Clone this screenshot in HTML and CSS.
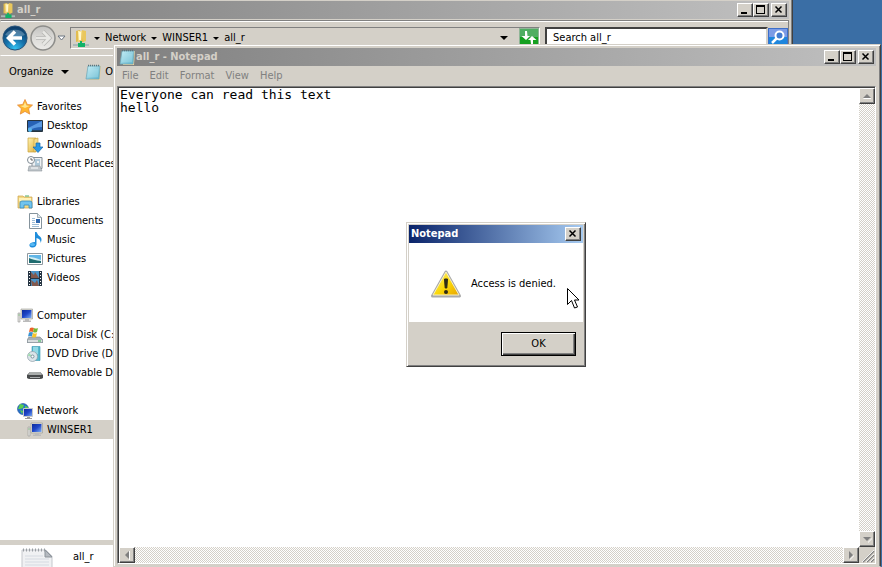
FILE: index.html
```html
<!DOCTYPE html>
<html lang="en">
<head>
<meta charset="utf-8">
<title>all_r - Notepad</title>
<link rel="stylesheet" href="styles.css">
</head>
<body>
<svg class="defs" aria-hidden="true">
  <defs>
    <linearGradient id="gold" x1="0" y1="0" x2="1" y2="1"><stop offset="0" stop-color="#fff3b0"/><stop offset="1" stop-color="#dfaf3c"/></linearGradient>
    <linearGradient id="screen" x1="0" y1="0" x2="1" y2="1"><stop offset="0" stop-color="#0b2a9c"/><stop offset=".5" stop-color="#1f46c8"/><stop offset="1" stop-color="#7fb0f4"/></linearGradient>
    <linearGradient id="pad" x1="0" y1="0" x2="1" y2="1"><stop offset="0" stop-color="#c9f0f8"/><stop offset="1" stop-color="#5fb4cc"/></linearGradient>
    <linearGradient id="warn" x1="0" y1="0" x2="1" y2="1"><stop offset="0" stop-color="#fff27a"/><stop offset=".55" stop-color="#fbd808"/><stop offset="1" stop-color="#e8a400"/></linearGradient>
    <radialGradient id="back" cx=".5" cy=".95" r=".9"><stop offset="0" stop-color="#35c5f4"/><stop offset=".45" stop-color="#1673ac"/><stop offset="1" stop-color="#0d3c68"/></radialGradient>
    <linearGradient id="fwd" x1="0" y1="0" x2="0" y2="1"><stop offset="0" stop-color="#c2c2c0"/><stop offset=".5" stop-color="#dcdbd8"/><stop offset="1" stop-color="#ecebe8"/></linearGradient>
    <symbol id="i-share" viewBox="0 0 16 18">
      <path d="M3 2l4-1v11l-4 1z" fill="#e2bd50"/><path d="M5 2h6v11H5z" fill="url(#gold)"/><path d="M9 1l4 1v10l-3 1z" fill="#e9c75c"/><path d="M6 3h2v8H6z" fill="#fff8cf"/>
      <path d="M0 15h16v2H0z" fill="#aab9b9"/><path d="M7 12h2v2h3v4H5v-4h2z" fill="#12b267"/>
    </symbol>
    <symbol id="i-pad" viewBox="0 0 16 16">
      <path d="M4 2h12l-1 14H4z" fill="#e8cf9d"/><path d="M3 2h12l-1 13H1z" fill="url(#pad)" stroke="#6aa5b4" stroke-width=".7"/><path d="M3 1.500h12" stroke="#5a757e" stroke-width="1.500" stroke-dasharray="1 1"/><path d="M4 6h9M4 8h9M3 10h10M3 12h10" stroke="#b5e4ee" stroke-width=".6"/>
    </symbol>
    <symbol id="i-pc" viewBox="0 0 16 16">
      <path d="M1 5h2v9H1z" fill="#e4e4e0" stroke="#999" stroke-width=".6"/><path d="M1.500 7h1" stroke="#5b5"/><path d="M4 1h11.500v10H4z" fill="#dcdcd8" stroke="#98988f" stroke-width=".6"/><path d="M5 2h9.500v8H5z" fill="url(#screen)"/><path d="M8 11h4v1.500h2V14H6v-1.500h2z" fill="#bbb"/>
    </symbol>
  </defs>
</svg>

<main class="desktop">
  <section class="window explorer" aria-label="all_r">
    <header class="titlebar">
      <svg class="title-icon" viewBox="0 0 16 18"><use href="#i-share"/></svg>
      <h1 class="title">all_r</h1>
      <div class="controls">
        <button class="ctl" aria-label="Minimize"><svg viewBox="0 0 12 10"><path d="M2 7h6v2H2z"/></svg></button>
        <button class="ctl" aria-label="Maximize"><svg viewBox="0 0 12 10"><path fill-rule="evenodd" d="M1 0h9v9H1zM2 2v6h7V2z"/></svg></button>
        <button class="ctl close" aria-label="Close"><svg viewBox="0 0 12 10"><path d="M2.500 1.500l6 6M8.500 1.500l-6 6" stroke="#000" stroke-width="1.500"/></svg></button>
      </div>
    </header>
    <nav class="navbar">
      <button class="plain" aria-label="Back"><svg class="orb" viewBox="0 0 28 28"><circle cx="14" cy="14" r="13" fill="#c0c0bd"/><circle cx="14" cy="14" r="12" fill="url(#back)" stroke="#28557c"/><path d="M4 11a11 9 0 0 1 20 0q-10 4-20 0" fill="#fff" opacity=".25"/><path d="M14 7.500L7.500 14l6.500 6.500M8 14h13" fill="none" stroke="#fff" stroke-width="3.500"/></svg></button>
      <button class="plain" aria-label="Forward"><svg class="orb" viewBox="0 0 28 28"><circle cx="14" cy="14" r="12" fill="url(#fwd)" stroke="#8d8d8a" stroke-width="1.500"/><path d="M14 7.500l6.500 6.500-6.500 6.500M20 14H7" fill="none" stroke="#b5b5b2" stroke-width="4"/><path d="M14 7.500l6.500 6.500-6.500 6.500M20 14H7" fill="none" stroke="#e8e8e5" stroke-width="2.500"/></svg></button>
      <button class="plain recent" aria-label="Recent pages"><svg viewBox="0 0 9 6"><path d="M1 1h7L4.500 5z" fill="#fff" stroke="#6b7480"/></svg></button>
      <div class="address">
        <svg class="addr-icon" viewBox="0 0 16 18"><use href="#i-share"/></svg>
        <i class="arrow"></i>
        <a href="#network">Network</a><i class="arrow"></i>
        <a href="#winser1">WINSER1</a><i class="arrow"></i>
        <a href="#all_r">all_r</a>
        <i class="arrow last"></i>
        <button class="plain" aria-label="Refresh"><svg class="tool" viewBox="0 0 20 20"><path d="M0 0h20v20H0z" fill="#8fb596"/><path d="M1 1h18v8H1z" fill="#4fae62"/><path d="M1 9h18v10H1z" fill="#16a021"/><path d="M8 3H6v5H2.500L7 12l4-4H8.500zM12 16h2v-4h3.500L13 8l-4 4h2.500z" fill="#fff"/></svg></button>
      </div>
      <div class="search">
        <input type="text" aria-label="Search all_r" value="Search all_r">
        <button class="plain" aria-label="Search"><svg class="tool" viewBox="0 0 20 20"><path d="M0 0h20v20H0z" fill="#3d6fc9"/><path d="M1 1h18v8H1z" fill="#7b9be6"/><path d="M1 9h18v10H1z" fill="#1e86dd"/><circle cx="11.500" cy="7.500" r="4" fill="#427bd0" stroke="#fff" stroke-width="2"/><path d="M8.500 10.500L4 15" stroke="#fff" stroke-width="2.500"/></svg></button>
      </div>
    </nav>
    <div class="toolbar">
      <button class="plain organize">Organize<i class="arrow big"></i></button>
      <button class="plain open"><svg class="icon" viewBox="0 0 16 16"><use href="#i-pad"/></svg>Open</button>
    </div>
    <aside class="sidebar">
      <ul>
        <li><a class="head" href="#favorites"><svg class="icon" viewBox="0 0 16 16"><path d="M8 .5l2.300 5 5.200.6-3.900 3.600 1.100 5.400L8 12.400 3.300 15.100l1.100-5.400L.5 6.100l5.200-.6z" fill="#ffb52e" stroke="#e58a3a" stroke-width=".8"/><path d="M8 3l1.500 3.500 3 .4-4.500 2-4.500-2 3-.4z" fill="#ffe58f"/></svg>Favorites</a></li>
        <li><a href="#desktop"><svg class="icon" viewBox="0 0 16 16"><path d="M.5 2.500h15v11H.5z" fill="#2762b5" stroke="#26343f"/><path d="M1 10l14-7v6q-8 0-14 4z" fill="#5a9ae2"/><path d="M1 12h14v1H1z" fill="#27445e"/><circle cx="3" cy="12" r="2" fill="#59baf0"/></svg>Desktop</a></li>
        <li><a href="#downloads"><svg class="icon" viewBox="0 0 16 16"><path d="M1 1h8v14H1z" fill="url(#gold)" stroke="#c9a13b" stroke-width=".7"/><path d="M7 2l4-1v12l-4 2z" fill="#f5dc88" stroke="#c9a13b" stroke-width=".6"/><path d="M9 6h4v4h3l-5 5.500L6 10h3z" fill="#2898e6" stroke="#1667ad" stroke-width=".7"/></svg>Downloads</a></li>
        <li><a href="#recent"><svg class="icon" viewBox="0 0 16 16"><path d="M5 1.500h10v11H5z" fill="#eef1f3" stroke="#879199"/><path d="M8 4h5M8 6h2M12 6h1M8 8h5M8 10h5" stroke="#6f9fbd"/><path d="M2 10h11l2 5H1z" fill="#bfc6cb" stroke="#8d959a" stroke-width=".6"/><circle cx="4" cy="4" r="3.500" fill="#fff" stroke="#7f8b94"/><path d="M4 2v2h2" fill="none" stroke="#444" stroke-width=".8"/><path d="M4 12h7" stroke="#fff"/></svg>Recent Places</a></li>
      </ul>
      <ul>
        <li><a class="head" href="#libraries"><svg class="icon" viewBox="0 0 16 16"><path d="M1 14V2h5l1 1h8v11z" fill="#f3d983" stroke="#cba24b" stroke-width=".7"/><path d="M2 4h12v3H2z" fill="#fff2b8"/><path d="M8 2h4" stroke="#53ae67"/><path d="M3 14V9q0-2 2-2h8q2 0 2 2v5h-3v-3H7v3z" fill="#71c4ee" stroke="#368abc" stroke-width=".8"/></svg>Libraries</a></li>
        <li><a href="#documents"><svg class="icon" viewBox="0 0 16 16"><path d="M2.500.5h8l4 4v11h-12z" fill="#fff" stroke="#85939c"/><path d="M10.500.5v4h4" fill="#dce5ea" stroke="#85939c" stroke-width=".7"/><path d="M5 5.500h3M5 7.500h3M5 9.500h3M5 11.500h7M5 13.500h7" stroke="#9dbdd6"/><path d="M9 6h4v4H9z" fill="#2c67af"/></svg>Documents</a></li>
        <li><a href="#music"><svg class="icon" viewBox="0 0 16 16"><path d="M8 0h1.500q1 3 4 5 2 2 0 6 .5-4-4-5v6.500Q8.500 16 5 15.500 2 15 2.500 12.500 3.500 10 8 10z" fill="#1e8ddb"/><ellipse cx="5.500" cy="12.500" rx="2.500" ry="1.500" fill="#58baf5"/></svg>Music</a></li>
        <li><a href="#pictures"><svg class="icon" viewBox="0 0 16 16"><path d="M.5 2.500h15v11H.5z" fill="#fff" stroke="#8e989e"/><path d="M2 4h12v8H2z" fill="#61b6e7"/><path d="M2 6q5 0 12 3v3H2z" fill="#d5eff3"/><path d="M2 7q4 2 12 3v2H2z" fill="#206c70"/></svg>Pictures</a></li>
        <li><a href="#videos"><svg class="icon" viewBox="0 0 16 16"><path d="M1 1h14v15H1z" fill="#273644"/><path d="M4 1h8v7H4zM4 9h8v7H4z" fill="#4a94c9"/><path d="M4 2l3 3 1-3 4 6H4zM4 10l4 3 2-3 2 6H5z" fill="#83594d"/><path d="M2.500 2v14M13.500 2v14" stroke="#fff" stroke-dasharray="1 2"/></svg>Videos</a></li>
      </ul>
      <ul>
        <li><a class="head" href="#computer"><svg class="icon" viewBox="0 0 16 16"><use href="#i-pc"/></svg>Computer</a></li>
        <li><a href="#c"><svg class="icon" viewBox="0 0 16 16"><path d="M2 10h11l3 3v3H0v-3z" fill="#a7b0b5" stroke="#78838a" stroke-width=".6"/><path d="M1 13h14v2H1z" fill="#d8dddf"/><path d="M11 14h3" stroke="#2bb84d"/><path d="M3 1q2-1 4 0L6 5Q4 4 2 5z" fill="#ed6027"/><path d="M7 1q2 1 4 0l-1 4Q8 6 6 5z" fill="#78b734"/><path d="M2 5.500q2-1 4 0l-1 4q-2-1-4 0z" fill="#3893d4"/><path d="M6 6q2 1 4 0l-1 4q-2 1-4 0z" fill="#f8c52c"/></svg>Local Disk (C:)</a></li>
        <li><a href="#d"><svg class="icon" viewBox="0 0 16 16"><path d="M5 .5h8v14H5z" fill="#55b8ce" stroke="#3595ae" stroke-width=".6"/><path d="M6 1h5v7H6z" fill="#91d9e5"/><circle cx="5.500" cy="10.500" r="5" fill="#dce5ea" stroke="#8c9ca6" stroke-width=".7"/><path d="M5.500 10.500L2 7l-1 3z" fill="#a2dfb0"/><circle cx="5.500" cy="10.500" r="1.500" fill="#fff" stroke="#7f929c"/></svg>DVD Drive (D:)</a></li>
        <li><a href="#e"><svg class="icon" viewBox="0 0 16 16"><path d="M3 7h10l3 3v3q-1 1-3 1H3q-2 0-3-1v-3z" fill="#484b4c"/><path d="M3 7h10l2 3H1z" fill="#aaaead"/><path d="M3 12h10v1H3z" fill="#a8acad"/></svg>Removable Disk</a></li>
      </ul>
      <ul>
        <li><a class="head" href="#network"><svg class="icon" viewBox="0 0 16 16"><circle cx="6" cy="6" r="5.500" fill="#2773c9" stroke="#1c4c98" stroke-width=".6"/><path d="M3 1l4 1-1 3-3 1-2 0zM8 3l3 1-1 4-2-1zM3 7l3 1-1 3z" fill="#5bcf4f"/><path d="M6.500 5.500h9v8h-9z" fill="url(#screen)" stroke="#c7c9c8"/><path d="M10 14h3v1h2v1H8v-1h2z" fill="#999"/></svg>Network</a></li>
        <li class="selected"><a href="#winser1"><svg class="icon" viewBox="0 0 16 16"><use href="#i-pc"/></svg>WINSER1</a></li>
      </ul>
    </aside>
    <footer class="details">
      <svg class="file" viewBox="0 0 32 22"><path d="M1 3h24l6 6v13H1z" fill="#f0f1f3" stroke="#c5c8cd"/><path d="M24 3v7h7z" fill="#b5bac0" stroke="#8d949b"/><path d="M2 3h22" stroke="#9a9fa4" stroke-width="3" stroke-dasharray="1 2"/><path d="M4 9h18M4 12h24M4 15h24M4 18h24" stroke="#d5dae1"/></svg>
      <span>all_r</span>
    </footer>
  </section>

  <section class="window notepad" aria-label="all_r - Notepad">
    <header class="titlebar">
      <svg class="title-icon" viewBox="0 0 16 16"><use href="#i-pad"/></svg>
      <h2 class="title">all_r - Notepad</h2>
      <div class="controls">
        <button class="ctl" aria-label="Minimize"><svg viewBox="0 0 12 10"><path d="M2 7h6v2H2z"/></svg></button>
        <button class="ctl" aria-label="Maximize"><svg viewBox="0 0 12 10"><path fill-rule="evenodd" d="M1 0h9v9H1zM2 2v6h7V2z"/></svg></button>
        <button class="ctl close" aria-label="Close"><svg viewBox="0 0 12 10"><path d="M2.500 1.500l6 6M8.500 1.500l-6 6" stroke="#000" stroke-width="1.500"/></svg></button>
      </div>
    </header>
    <div class="menu">
      <button class="plain">File</button><button class="plain">Edit</button><button class="plain">Format</button><button class="plain">View</button><button class="plain">Help</button>
    </div>
    <div class="editor">
      <textarea aria-label="Document text" spellcheck="false">Everyone can read this text
hello</textarea>
      <div class="scroll vertical">
        <button class="step" aria-label="Scroll up"><svg viewBox="0 0 12 12"><path d="M2 8h8v1H3z" fill="#fff"/><path d="M6 4l4 4H2z"/></svg></button>
        <button class="step" aria-label="Scroll down"><svg viewBox="0 0 12 12"><path d="M7 9l4-4v1L7 10z" fill="#fff"/><path d="M2 4h8L6 8z"/></svg></button>
      </div>
      <div class="scroll horizontal">
        <button class="step" aria-label="Scroll left"><svg viewBox="0 0 12 12"><path d="M8 2h1v9H8z" fill="#fff"/><path d="M8 2v8L4 6z"/></svg></button>
        <button class="step" aria-label="Scroll right"><svg viewBox="0 0 12 12"><path d="M5 10l4-4v1l-4 4z" fill="#fff"/><path d="M4 2v8l4-4z"/></svg></button>
      </div>
      <svg class="grip" viewBox="0 0 16 16"><path d="M4 15L15 4M8 15l7-7M12 15l3-3" stroke="#808080" stroke-width="1.500"/><path d="M3 15L15 3M7 15l8-8M11 15l4-4" stroke="#fff" stroke-width=".8"/></svg>
    </div>
  </section>

  <section class="window dialog" role="dialog" aria-labelledby="dialog-title">
    <header class="titlebar active">
      <h2 class="title" id="dialog-title">Notepad</h2>
      <div class="controls"><button class="ctl close" aria-label="Close"><svg viewBox="0 0 12 10"><path d="M2.500 1.500l6 6M8.500 1.500l-6 6" stroke="#000" stroke-width="1.500"/></svg></button></div>
    </header>
    <div class="message">
      <svg class="warning" viewBox="0 0 32 30"><path d="M16 3L29.500 27h-27z" fill="#aaa" stroke="#aaa" stroke-width="3" stroke-linejoin="round"/><path d="M16 3L29 26H3z" fill="url(#warn)" stroke="#f7f0c4" stroke-width="1" stroke-linejoin="round"/><path d="M14.500 10h3l-.7 9h-1.600z" fill="#2e2a16" stroke="#2e2a16" stroke-linejoin="round"/><circle cx="16" cy="23" r="2" fill="#2e2a16"/></svg>
      <p>Access is denied.</p>
    </div>
    <div class="actions"><button class="ok">OK</button></div>
  </section>

  <svg class="pointer" viewBox="0 0 12 21" aria-hidden="true"><path d="M.5.5v16l4-4 3 7.500 3-1-3-7h4.500z" fill="#fff" stroke="#000"/></svg>
</main>
</body>
</html>
```
FILE: styles.css
```css
* { box-sizing: border-box; }

body {
  margin: 0;
  overflow: hidden;
  font: 11px/14px "DejaVu Sans Condensed", "DejaVu Sans", sans-serif;
  color: #000;
}

button, input { font: inherit; color: inherit; }
a { color: inherit; text-decoration: none; }
ul { margin: 0; padding: 0; list-style: none; }
svg { display: block; flex: none; }
.defs { position: absolute; width: 0; height: 0; }

.desktop {
  position: relative;
  height: 100vh;
  overflow: hidden;
  background: #3a6ea5;
}

.window {
  position: absolute;
  display: flex;
  flex-direction: column;
  background: #d4d0c8;
}

.plain {
  display: flex;
  align-items: center;
  padding: 0;
  border: 0;
  background: none;
  white-space: nowrap;
}

/* Title bars */
.titlebar {
  display: flex;
  align-items: center;
  flex: none;
  height: 18px;
  padding: 0 2px;
  gap: 1px;
  background: linear-gradient(90deg, #808080, #c0c0c0);
  color: #d4d0c8;
}
.titlebar.active {
  background: linear-gradient(90deg, #0a246a, #a6caf0);
  color: #fff;
}
.title {
  flex: 1;
  margin: 0;
  font-size: 11px;
  font-weight: bold;
}
.title-icon { width: 16px; height: 16px; }
.controls { display: flex; }
.ctl, .step {
  display: flex;
  align-items: center;
  justify-content: center;
  width: 16px;
  height: 14px;
  padding: 0;
  border: 1px solid;
  border-color: #fff #404040 #404040 #fff;
  background: #d4d0c8;
  box-shadow: inset -1px -1px #808080;
}
.ctl svg { width: 12px; height: 10px; }
.ctl.close { margin-left: 2px; }

/* Explorer */
.explorer {
  top: 0;
  bottom: 0;
  left: 0;
  right: 89px;
  padding: 1px 3px 0 0;
  border-right: 1px solid #404040;
  box-shadow: inset -1px 0 #808080;
}
.explorer .titlebar { padding-left: 0; }
.navbar {
  display: flex;
  align-items: center;
  height: 36px;
  margin-top: 1px;
  border: 1px solid;
  border-color: #808080 #808080 #fff transparent;
  box-shadow: inset 0 1px #fff;
}
.orb { width: 28px; height: 28px; }
.recent { margin: 0 4px 0 0; }
.recent svg { width: 9px; height: 6px; }
.address {
  display: flex;
  align-items: center;
  flex: 1;
  height: 22px;
  gap: 5px;
  padding-left: 2px;
  border: 1px solid;
  border-color: #808080 #fff #fff #808080;
}
.addr-icon { width: 16px; height: 18px; }
.arrow {
  width: 6px;
  border: 3px solid transparent;
  border-top-color: #000;
  border-bottom: 0;
}
.arrow.last { margin-left: auto; margin-right: 6px; border-width: 4px 4px 0; width: 8px; }
.arrow.big { margin-left: 8px; border-width: 4px 4px 0; width: 8px; }
.tool { width: 20px; height: 20px; }
.search { display: flex; align-items: center; margin-left: 5px; }
.search input {
  width: 223px;
  height: 22px;
  padding: 0 6px 2px;
  border: 2px solid;
  border-color: #404040 #d4d0c8 #fff #404040;
  background: #fff;
  outline: 0;
}
.toolbar {
  display: flex;
  align-items: center;
  flex: none;
  height: 31px;
  gap: 16px;
  padding-left: 9px;
}
.open {
  width: 28px;
  gap: 4px;
  overflow: hidden;
}
.icon { width: 16px; height: 16px; }
.sidebar {
  display: flex;
  flex-direction: column;
  flex: 1;
  gap: 19px;
  padding-top: 10px;
  background: #fff;
}
.sidebar a {
  display: flex;
  align-items: center;
  gap: 4px;
  height: 19px;
  padding-left: 27px;
}
.sidebar .head { padding-left: 17px; }
.selected { background: #d4d0c8; }
.details {
  display: flex;
  flex: none;
  height: 27px;
  gap: 20px;
  padding: 2px 0 0 21px;
  border-top: 5px solid #d4d0c8;
  background: #fff;
  line-height: 20px;
}
.file { width: 32px; height: 22px; }

/* Notepad */
.notepad {
  top: 44px;
  bottom: 0;
  left: 113px;
  right: 1px;
  padding: 3px 4px 2px 3px;
  border: 1px solid;
  border-color: #d4d0c8 #404040 #d4d0c8 #d4d0c8;
  box-shadow: inset 1px 1px #fff, inset -1px 0 #808080;
}
.menu {
  display: flex;
  align-items: center;
  flex: none;
  height: 20px;
  gap: 11px;
  padding-left: 5px;
  color: #808080;
}
.editor {
  display: grid;
  flex: 1;
  min-height: 0;
  grid-template: 1fr 16px / 1fr 16px;
  border: 1px solid;
  border-color: #808080 #fff #fff #808080;
}
textarea {
  width: 100%;
  height: 100%;
  padding: 0 1px;
  border: 0 solid #404040;
  border-width: 1px 0 0 1px;
  outline: 0;
  resize: none;
  overflow: hidden;
  background: #fff;
  color: #000;
  font: 13px/13px "DejaVu Sans Mono", monospace;
}
.scroll {
  display: flex;
  justify-content: space-between;
  background: repeating-conic-gradient(#fff 0 25%, #d4d0c8 0 50%) 0 0 / 2px 2px;
}
.vertical { flex-direction: column; border-top: 1px solid #404040; }
.horizontal { border-left: 1px solid #404040; }
.step { height: 16px; }
.step svg { width: 12px; height: 12px; fill: #808080; }
.grip { width: 16px; height: 16px; }

/* Message box */
.dialog {
  top: 222px;
  left: 406px;
  width: 180px;
  padding: 2px;
  border: 1px solid;
  border-color: #d4d0c8 #404040 #404040 #d4d0c8;
  box-shadow: inset 1px 1px #fff, inset -1px -1px #808080;
}
.message {
  display: flex;
  align-items: center;
  height: 79px;
  gap: 9px;
  padding: 3px 0 0 21px;
  background: #fff;
}
.message p { margin: 0; }
.warning { width: 32px; height: 30px; }
.actions {
  display: flex;
  justify-content: flex-end;
  padding: 10px 7px 8px;
}
.ok {
  width: 75px;
  height: 24px;
  padding: 0;
  border: 1px solid #000;
  background: #d4d0c8;
  box-shadow: inset 1px 1px #fff, inset -1px -1px #404040, inset -2px -2px #808080;
}
.pointer {
  position: absolute;
  top: 288px;
  left: 567px;
  width: 12px;
  height: 21px;
}
```
